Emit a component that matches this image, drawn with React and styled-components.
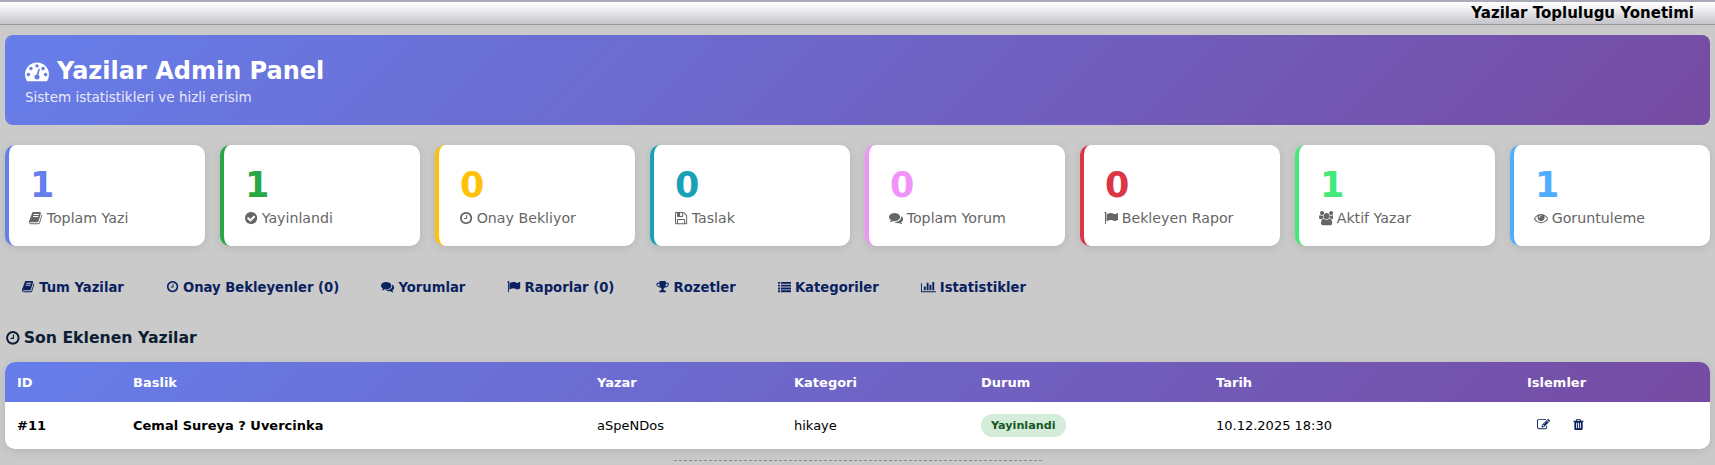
import React from "react";
import styled, { createGlobalStyle } from "styled-components";

const Global = createGlobalStyle`
  html, body { margin: 0; padding: 0; background: #cacaca; }
  body { font-family: "DejaVu Sans", Verdana, sans-serif; width: 1715px; height: 465px; overflow: hidden; }
  * { box-sizing: border-box; }
`;
const Grad = "linear-gradient(135deg, #667eea 0%, #764ba2 100%)";

const P = {
  gauge: "M384 1152q0-53-37.5-90.5t-90.5-37.5-90.5 37.5-37.5 90.5 37.5 90.5 90.5 37.5 90.5-37.5 37.5-90.5zm192-448q0-53-37.5-90.5t-90.5-37.5-90.5 37.5-37.5 90.5 37.5 90.5 90.5 37.5 90.5-37.5 37.5-90.5zm428 481l101-382q6-26-7.5-48.5t-38.5-29.5-48 6.5-30 39.5l-101 382q-60 5-107 43.5t-63 98.5q-20 77 20 146t117 89 146-20 89-117q16-60-6-117t-72-91zm660-33q0-53-37.5-90.5t-90.5-37.5-90.5 37.5-37.5 90.5 37.5 90.5 90.5 37.5 90.5-37.5 37.5-90.5zm-640-640q0-53-37.5-90.5t-90.5-37.5-90.5 37.5-37.5 90.5 37.5 90.5 90.5 37.5 90.5-37.5 37.5-90.5zm448 192q0-53-37.5-90.5t-90.5-37.5-90.5 37.5-37.5 90.5 37.5 90.5 90.5 37.5 90.5-37.5 37.5-90.5zm320 448q0 261-141 483-19 29-54 29h-1402q-35 0-54-29-141-221-141-483 0-182 71-348t191-286 286-191 348-71 348 71 286 191 191 286 71 348z",
  book: "M1639 478q40 57 18 129l-275 906q-19 64-76.5 107.5t-122.5 43.5h-923q-77 0-148.5-53.5t-99.5-131.5q-24-67-2-127 0-4 3-27t4-37q1-8-3-21.5t-3-19.5q2-11 8-21t16.5-23.5 16.5-23.5q23-38 45-91.5t30-91.5q3-10 .5-30t-.5-28q3-11 17-28t17-23q21-36 42-92t25-90q1-9-2.5-32t.5-28q4-13 22-30.5t22-22.5q19-26 42.5-84.5t27.5-96.5q1-8-3-25.5t-2-26.5q2-8 9-18t18-23 17-21q8-12 16.5-30.5t15-35 16-36 19.5-32 26.5-23.5 36-11.5 47.5 5.5l-1 3q38-9 51-9h761q74 0 114 56t18 130l-274 906q-36 119-71.5 153.5t-128.5 34.5h-869q-27 0-38 15-11 16-1 43 24 70 144 70h923q29 0 56-15.5t35-41.5l300-987q7-22 5-57 38 15 59 43zm-1064 2q-4 13 2 22.5t20 9.5h608q13 0 25.5-9.5t16.5-22.5l21-64q4-13-2-22.5t-20-9.5h-608q-13 0-25.5 9.5t-16.5 22.5zm-83 256q-4 13 2 22.5t20 9.5h608q13 0 25.5-9.5t16.5-22.5l21-64q4-13-2-22.5t-20-9.5h-608q-13 0-25.5 9.5t-16.5 22.5z",
  clock: "M1024 544v448q0 14-9 23t-23 9h-320q-14 0-23-9t-9-23v-64q0-14 9-23t23-9h224v-352q0-14 9-23t23-9h64q14 0 23 9t9 23zm416 352q0-148-73-273t-198-198-273-73-273 73-198 198-73 273 73 273 198 198 273 73 273-73 198-198 73-273zm224 0q0 209-103 385.5t-279.5 279.5-385.5 103-385.5-103-279.5-279.5-103-385.5 103-385.5 279.5-279.5 385.5-103 385.5 103 279.5 279.5 103 385.5z",
  check: "M1412 734q0-28-18-46l-91-90q-19-19-45-19t-45 19l-408 407-226-226q-19-19-45-19t-45 19l-91 90q-18 18-18 46 0 27 18 45l362 362q19 19 45 19 27 0 46-19l543-543q18-18 18-45zm252 162q0 209-103 385.5t-279.5 279.5-385.5 103-385.5-103-279.5-279.5-103-385.5 103-385.5 279.5-279.5 385.5-103 385.5 103 279.5 279.5 103 385.5z",
  save: "M512 1536h768v-384h-768v384zm896 0h128v-896q0-14-10-38.5t-20-34.5l-281-281q-10-10-34-20t-39-10v416q0 40-28 68t-68 28h-576q-40 0-68-28t-28-68v-416h-128v1280h128v-416q0-40 28-68t68-28h832q40 0 68 28t28 68v416zm-384-928v-320q0-13-9.5-22.5t-22.5-9.5h-192q-13 0-22.5 9.5t-9.5 22.5v320q0 13 9.5 22.5t22.5 9.5h192q13 0 22.5-9.5t9.5-22.5zm640 32v928q0 40-28 68t-68 28h-1344q-40 0-68-28t-28-68v-1344q0-40 28-68t68-28h928q40 0 88 20t76 48l280 280q28 28 48 76t20 88z",
  comments: "M1408 768q0 139-94 257t-256.5 186.5-353.5 68.5q-86 0-176-16-124 88-278 128-36 9-86 16h-3q-11 0-20.5-8t-11.5-21q-1-3-1-6.5t.5-6.5 2-6l2.5-5 3.5-5.5 4-5 4.5-5 4-4.5q5-6 23-25t26-29.5 22.5-29 25-38.5 20.5-44q-124-72-195-177t-71-224q0-139 94-257t256.5-186.5 353.5-68.5 353.5 68.5 256.5 186.5 94 257zm384 256q0 120-71 224.5t-195 176.5q10 24 20.5 44t25 38.5 22.5 29 26 29.5 23 25q1 1 4 4.5t4.5 5 4 5 3.5 5.5l2.5 5 2 6 .5 6.5-1 6.5q-3 14-13 22t-22 7q-50-7-86-16-154-40-278-128-90 16-176 16-271 0-472-132 58 4 88 4 161 0 309-45t264-129q125-92 192-212t67-254q0-77-23-152 129 71 204 178t75 230z",
  flag: "M320 256q0 72-64 110v1266q0 13-9.5 22.5t-22.5 9.5h-64q-13 0-22.5-9.5t-9.5-22.5v-1266q-64-38-64-110 0-53 37.5-90.5t90.5-37.5 90.5 37.5 37.5 90.5zm1472 64v763q0 25-12.5 38.5t-39.5 27.5q-215 116-369 116-61 0-123.5-22t-108.5-48-115.5-48-142.5-22q-192 0-464 146-17 9-33 9-26 0-45-19t-19-45v-742q0-32 31-55 21-14 79-43 236-120 421-120 107 0 200 29t219 88q38 19 88 19 54 0 117.5-21t110-47 88-47 54.5-21q26 0 45 19t19 45z",
  users: "M593 896q-162 5-265 128h-134q-82 0-138-40.5t-56-118.5q0-353 124-353 6 0 43.5 21t97.5 42.5 119 21.5q67 0 133-23-5 37-5 66 0 139 81 256zm1071 637q0 120-73 189.5t-194 69.5h-874q-121 0-194-69.5t-73-189.5q0-53 3.5-103.5t14-109 26.5-108.5 43-97.5 62-81 85.5-53.5 111.5-20q10 0 43 21.5t73 48 107 48 135 21.5 135-21.5 107-48 73-48 43-21.5q61 0 111.5 20t85.5 53.5 62 81 43 97.5 26.5 108.5 14 109 3.5 103.5zm-1024-1277q0 106-75 181t-181 75-181-75-75-181 75-181 181-75 181 75 75 181zm704 384q0 159-112.5 271.5t-271.5 112.5-271.5-112.5-112.5-271.5 112.5-271.5 271.5-112.5 271.5 112.5 112.5 271.5zm576 225q0 78-56 118.5t-138 40.5h-134q-103-123-265-128 81-117 81-256 0-29-5-66 66 23 133 23 59 0 119-21.5t97.5-42.5 43.5-21q124 0 124 353zm-128-609q0 106-75 181t-181 75-181-75-75-181 75-181 181-75 181 75 75 181z",
  eye: "M1664 960q-152-236-381-353 61 104 61 225 0 185-131.5 316.5t-316.5 131.5-316.5-131.5-131.5-316.5q0-121 61-225-229 117-381 353 133 205 333.5 326.5t434.5 121.5 434.5-121.5 333.5-326.5zm-720-384q0-20-14-34t-34-14q-125 0-214.5 89.5t-89.5 214.5q0 20 14 34t34 14 34-14 14-34q0-86 61-147t147-61q20 0 34-14t14-34zm848 384q0 34-20 69-140 230-376.5 368.5t-499.5 138.5-499.5-139-376.5-368q-20-35-20-69t20-69q140-229 376.5-368t499.5-139 499.5 139 376.5 368q20 35 20 69z",
  trophy: "M522 883q-74-162-74-371h-256v96q0 78 94.5 162t235.5 113zm1078-275v-96h-256q0 209-74 371 141-29 235.5-113t94.5-162zm128-128v128q0 71-41.5 143t-112 130-173 97.5-215.5 44.5q-42 54-95 95-38 34-52.5 72.5t-14.5 89.5q0 54 30.5 91t97.5 37q75 0 133.5 45.5t58.5 114.5v64q0 14-9 23t-23 9h-832q-14 0-23-9t-9-23v-64q0-69 58.5-114.5t133.5-45.5q67 0 97.5-37t30.5-91q0-51-14.5-89.5t-52.5-72.5q-53-41-95-95-113-5-215.5-44.5t-173-97.5-112-130-41.5-143v-128q0-40 28-68t68-28h288v-96q0-66 47-113t113-47h576q66 0 113 47t47 113v96h288q40 0 68 28t28 68z",
  list: "M0 256h256v256h-256zM384 256h1408v256h-1408zM0 640h256v256h-256zM384 640h1408v256h-1408zM0 1024h256v256h-256zM384 1024h1408v256h-1408zM0 1408h256v256h-256zM384 1408h1408v256h-1408z",
  chart: "M640 896v512h-256v-512h256zm384-512v1024h-256v-1024h256zm1024 1152v128h-2048v-1216h128v1088h1920zm-640-896v768h-256v-768h256zm384-384v1152h-256v-1152h256z",
  edit: "M888 1184l116-116-152-152-116 116v56h96v96h56zm440-720q-16-16-33 1l-350 350q-17 17-1 33t33-1l350-350q17-17 1-33zm80 594v190q0 119-84.5 203.5t-203.5 84.5h-832q-119 0-203.5-84.5t-84.5-203.5v-832q0-119 84.5-203.5t203.5-84.5h832q63 0 117 25 15 7 18 23 3 17-9 29l-49 49q-14 14-32 8-23-6-45-6h-832q-66 0-113 47t-47 113v832q0 66 47 113t113 47h832q66 0 113-47t47-113v-126q0-13 9-22l64-64q15-15 35-7t20 29zm-96-738l288 288-672 672h-288v-288zm444 132l-92 92-288-288 92-92q28-28 68-28t68 28l152 152q28 28 28 68t-28 68z",
  trash: "M704 1376v-704q0-14-9-23t-23-9h-64q-14 0-23 9t-9 23v704q0 14 9 23t23 9h64q14 0 23-9t9-23zm256 0v-704q0-14-9-23t-23-9h-64q-14 0-23 9t-9 23v704q0 14 9 23t23 9h64q14 0 23-9t9-23zm256 0v-704q0-14-9-23t-23-9h-64q-14 0-23 9t-9 23v704q0 14 9 23t23 9h64q14 0 23-9t9-23zm-544-992h448l-48-117q-7-9-17-11h-317q-10 2-17 11zm928 32v64q0 14-9 23t-23 9h-96v948q0 83-47 143.5t-113 60.5h-832q-66 0-113-47.5t-47-141.5v-963h-96q-14 0-23-9t-9-23v-64q0-14 9-23t23-9h309l70-167q15-37 54-63t79-26h320q40 0 79 26t54 63l70 167h309q14 0 23 9t9 23z",
};

const Svg = styled.svg`
  height: 1em; width: ${(p) => p.$vw / 1792}em; flex: none; fill: currentColor;
`;
const Icon = ({ n }) => {
  const vw = n === "chart" ? 2048 : 1792;
  return <Svg viewBox={`0 0 ${vw} 1792`} $vw={vw}><path d={P[n]} /></Svg>;
};

const TopBar = styled.div`
  height: 25px; border-top: 2px solid #a9a9b8; border-bottom: 1px solid #9a9a9e;
  background: linear-gradient(to bottom, #ffffff 0%, #f4f4f6 25%, #c3c3ca 100%);
  display: flex; justify-content: flex-end; align-items: center;
  padding-right: 21px; font-size: 15px; font-weight: 700; color: #000;
`;
const Page = styled.main`
  padding: 10px 5px 0;
`;
const Hero = styled.header`
  height: 90px; border-radius: 8px; background: ${Grad}; color: #fff;
  padding: 22px 20px; margin-bottom: 20px;
`;
const HeroTitle = styled.h1`
  margin: 0; font-size: 24px; line-height: 28px; font-weight: 700;
  display: flex; align-items: center; gap: 8px;
`;
const HeroSub = styled.p`
  margin: 4px 0 0; font-size: 13.5px; line-height: 16px; color: #ebe9fa;
`;
const Stats = styled.section`
  display: grid; grid-template-columns: repeat(8, 200px); gap: 15px; margin-bottom: 24px;
`;
const Card = styled.div`
  height: 101px; background: #fff; border-radius: 10px; border-left: 4px solid ${(p) => p.$c};
  box-shadow: 0 2px 10px rgba(0,0,0,0.1); padding: 20px 20px 0 20px;
`;
const Num = styled.div`
  font-size: 35px; line-height: 41px; font-weight: 700; color: ${(p) => p.$c};
  margin-bottom: 4px; padding-left: 1px;
`;
const Label = styled.div`
  font-size: 14.2px; line-height: 17px; color: #666; display: flex; align-items: center; gap: 3.5px;
`;
const Nav = styled.nav`
  display: flex; gap: 42px; padding: 0 0 0 17px; height: 34px; align-items: center; margin-bottom: 23px;
`;
const NavLink = styled.a`
  font-size: 13.2px; font-weight: 700; color: #0a2160; display: flex; align-items: center; gap: 4px; white-space: nowrap;
`;
const SectionTitle = styled.h2`
  margin: 0 0 13px; font-size: 15.7px; line-height: 22px; font-weight: 700; color: #0c1e33;
  display: flex; align-items: center; gap: 3px;
`;
const TableWrap = styled.div`
  height: 87px; background: #fff; border-radius: 10px; overflow: hidden;
  box-shadow: 0 2px 10px rgba(0,0,0,0.1);
`;
const Table = styled.table`
  width: 100%; border-collapse: collapse; table-layout: fixed; font-size: 13px;
`;
const Th = styled.th`
  height: 40px; padding: 0 12px; text-align: left; color: #fff; font-weight: 700;
  width: ${(p) => p.$w}px;
`;
const HeadRow = styled.tr`
  background: ${Grad};
`;
const Td = styled.td`
  height: 47px; padding: 0 12px; color: #000; font-weight: ${(p) => (p.$b ? 700 : 400)};
  border-bottom: 1px solid #dedede;
`;
const Badge = styled.span`
  display: inline-block; background: #d4edda; color: #155724; border-radius: 12px;
  font-size: 11.2px; font-weight: 700; padding: 5px 10px; line-height: 13px;
`;
const Actions = styled.div`
  display: flex; gap: 22px; padding-left: 10px; color: #0a2160; font-size: 13px; margin-top: -2px;
`;
const Footer = styled.div`
  width: 368px; margin: 11px auto 0; border-top: 1px dashed #8a8a8a;
`;

const stats = [
  ["1", "Toplam Yazi", "#667eea", "book"],
  ["1", "Yayinlandi", "#28a745", "check"],
  ["0", "Onay Bekliyor", "#ffc107", "clock"],
  ["0", "Taslak", "#17a2b8", "save"],
  ["0", "Toplam Yorum", "#f093fb", "comments"],
  ["0", "Bekleyen Rapor", "#dc3545", "flag"],
  ["1", "Aktif Yazar", "#43e97b", "users"],
  ["1", "Goruntuleme", "#4facfe", "eye"],
];
const links = [
  ["Tum Yazilar", "book"], ["Onay Bekleyenler (0)", "clock"], ["Yorumlar", "comments"],
  ["Raporlar (0)", "flag"], ["Rozetler", "trophy"], ["Kategoriler", "list"], ["Istatistikler", "chart"],
];

export default function App() {
  return (
    <>
      <Global />
      <TopBar>Yazilar Toplulugu Yonetimi</TopBar>
      <Page>
        <Hero>
          <HeroTitle><Icon n="gauge" />Yazilar Admin Panel</HeroTitle>
          <HeroSub>Sistem istatistikleri ve hizli erisim</HeroSub>
        </Hero>
        <Stats>
          {stats.map(([n, l, c, i]) => (
            <Card key={l} $c={c}>
              <Num $c={c}>{n}</Num>
              <Label><Icon n={i} />{l}</Label>
            </Card>
          ))}
        </Stats>
        <Nav>
          {links.map(([l, i]) => <NavLink key={l}><Icon n={i} />{l}</NavLink>)}
        </Nav>
        <SectionTitle><Icon n="clock" />Son Eklenen Yazilar</SectionTitle>
        <TableWrap>
          <Table>
            <thead>
              <HeadRow>
                <Th $w={116}>ID</Th><Th $w={464}>Baslik</Th><Th $w={197}>Yazar</Th><Th $w={187}>Kategori</Th>
                <Th $w={235}>Durum</Th><Th $w={311}>Tarih</Th><Th>Islemler</Th>
              </HeadRow>
            </thead>
            <tbody>
              <tr>
                <Td $b>#11</Td><Td $b>Cemal Sureya ? Uvercinka</Td><Td>aSpeNDos</Td><Td>hikaye</Td>
                <Td><Badge>Yayinlandi</Badge></Td><Td>10.12.2025 18:30</Td>
                <Td><Actions><Icon n="edit" /><Icon n="trash" /></Actions></Td>
              </tr>
            </tbody>
          </Table>
        </TableWrap>
        <Footer />
      </Page>
    </>
  );
}
